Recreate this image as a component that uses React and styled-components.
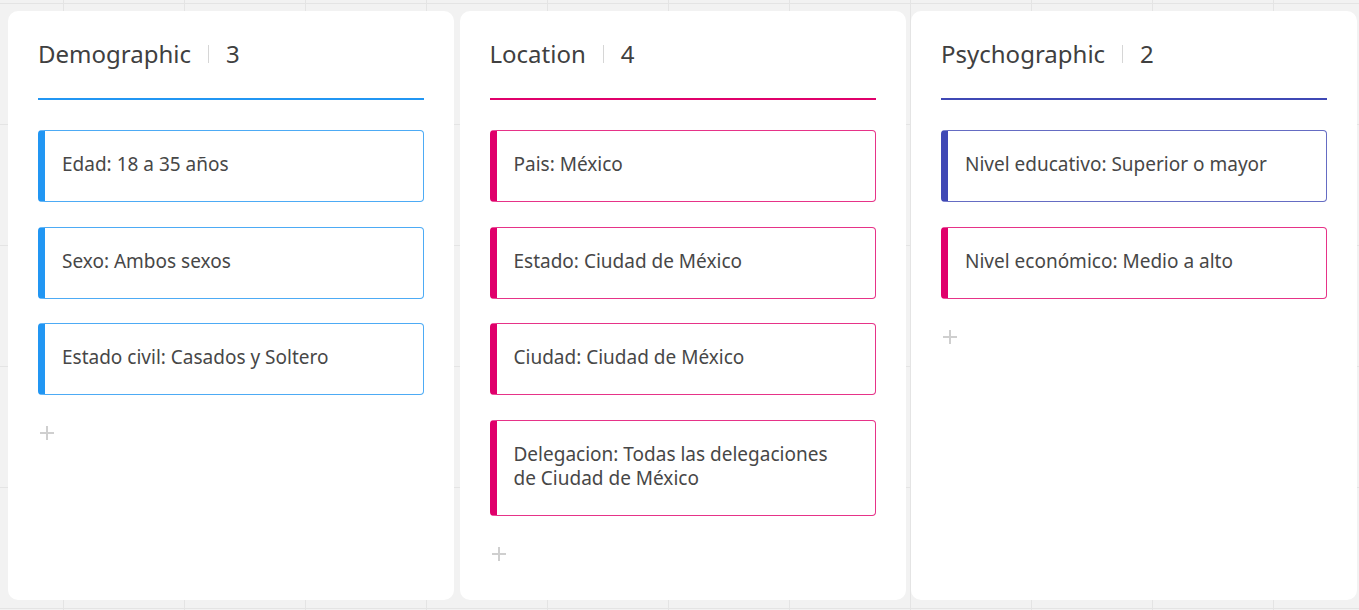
import React from 'react';
import styled, { createGlobalStyle } from 'styled-components';

const GlobalStyle = createGlobalStyle`
  html, body {
    margin: 0;
    padding: 0;
  }
  body {
    font-family: "Segoe UI", "Noto Sans", "Open Sans", sans-serif;
    color: #333;
  }
`;

const Board = styled.div`
  display: grid;
  grid-template-columns: repeat(3, 1fr);
  gap: 5.5px;
  height: 610px;
  box-sizing: border-box;
  padding: 11px 2px 10px 8px;
  background-color: #f2f2f2;
  background-image:
    linear-gradient(to right, #e4e4e4 1px, transparent 1px),
    linear-gradient(to bottom, #e4e4e4 1px, transparent 1px);
  background-size: 121px 121px;
  background-position: 63px 3px;
`;

const Column = styled.section`
  background: #fff;
  border-radius: 10px;
  padding: 0 30px;
  display: flex;
  flex-direction: column;
`;

const Header = styled.header`
  height: 89px;
  box-sizing: border-box;
  padding-bottom: 2px;
  display: flex;
  align-items: center;
  border-bottom: 2px solid ${p => p.color};
  font-size: 24px;
  color: #404040;
`;

const Divider = styled.span`
  width: 1px;
  height: 18px;
  background: #d6d6d6;
  margin: 0 17px;
`;

const CardList = styled.div`
  display: flex;
  flex-direction: column;
  gap: 24.7px;
  margin-top: 30px;
`;

const Card = styled.div`
  border: 1px solid ${p => p.color}cc;
  border-left: 7px solid ${p => p.color};
  border-radius: 4px;
  padding: 21px 26px 25px 17px;
  min-height: 24px;
  font-size: 19px;
  line-height: 24px;
  color: #474747;
`;

const AddButton = styled.button`
  align-self: flex-start;
  margin-top: 30px;
  margin-left: 1px;
  padding: 0;
  width: 16px;
  height: 16px;
  border: none;
  background: none;
  cursor: pointer;
  display: flex;
  align-items: center;
  justify-content: center;
`;

const BLUE = '#2196f3';
const PINK = '#e0006b';
const INDIGO = '#3f48b5';

const columns = [
  {
    title: 'Demographic',
    color: BLUE,
    items: [
      { text: 'Edad: 18 a 35 años', color: BLUE },
      { text: 'Sexo: Ambos sexos', color: BLUE },
      { text: 'Estado civil: Casados y Soltero', color: BLUE },
    ],
  },
  {
    title: 'Location',
    color: PINK,
    items: [
      { text: 'Pais: México', color: PINK },
      { text: 'Estado: Ciudad de México', color: PINK },
      { text: 'Ciudad: Ciudad de México', color: PINK },
      { text: 'Delegacion: Todas las delegaciones de Ciudad de México', color: PINK },
    ],
  },
  {
    title: 'Psychographic',
    color: INDIGO,
    items: [
      { text: 'Nivel educativo: Superior o mayor', color: INDIGO },
      { text: 'Nivel económico: Medio a alto', color: PINK },
    ],
  },
];

const PlusIcon = () => (
  <svg width="16" height="16" viewBox="0 0 16 16">
    <path d="M8 1v14M1 8h14" stroke="#cfcfcf" strokeWidth="2" />
  </svg>
);

const App = () => {
  return (
    <>
      <GlobalStyle />
      <Board>
        {columns.map(col => (
          <Column key={col.title}>
            <Header color={col.color}>
              {col.title}
              <Divider />
              {col.items.length}
            </Header>
            <CardList>
              {col.items.map(item => (
                <Card key={item.text} color={item.color}>{item.text}</Card>
              ))}
            </CardList>
            <AddButton aria-label="Agregar">
              <PlusIcon />
            </AddButton>
          </Column>
        ))}
      </Board>
    </>
  );
};

export default App;
